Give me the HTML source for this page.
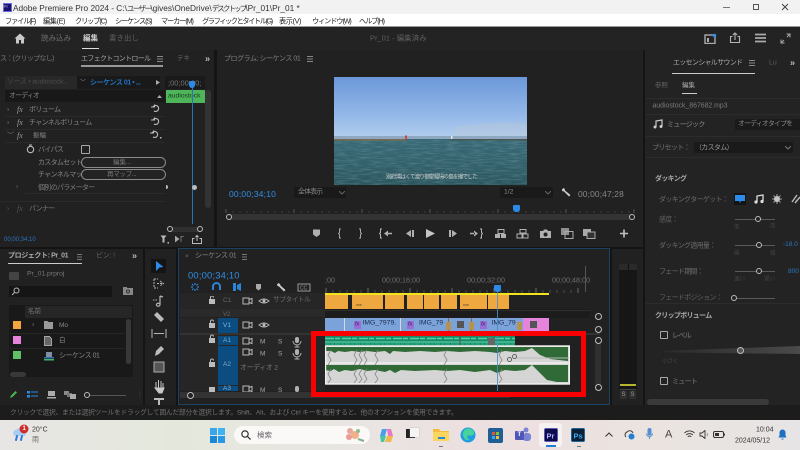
<!DOCTYPE html>
<html lang="ja"><head><meta charset="utf-8"><title>Adobe Premiere Pro 2024</title>
<style>
html,body{margin:0;padding:0;background:#1a1a1a}
#r{position:relative;width:800px;height:450px;overflow:hidden;background:#141414;font-family:"Liberation Sans","Noto Sans CJK JP",sans-serif;filter:blur(.3px)}
#r div,#r svg{position:absolute;display:block}
.t{position:absolute;white-space:nowrap;transform:translateY(-50%);line-height:1;font-size:7.5px;color:#8c8c8c;letter-spacing:-.7px}
.n{letter-spacing:0}
.m{font-size:7.2px;color:#222;letter-spacing:-1.1px;top:20.5px}
.cb{position:absolute;border:1.2px solid #a8a8a8;box-sizing:border-box;border-radius:1px}
.kn{position:absolute;width:6px;height:6px;border:1.2px solid #bdbdbd;border-radius:50%;box-sizing:border-box;background:#222}
.ln{position:absolute;height:1px;background:#5a5a5a}
.fx{font-style:italic;font-family:"Liberation Serif",serif;font-size:8px;letter-spacing:0}
</style></head><body><div id="r">

<!-- title bar -->
<div style="left:0;top:0;width:800px;height:14px;background:#f2f2f2"></div>
<div style="left:3px;top:3px;width:7px;height:7px;background:#1a1266;border:.5px solid #6d6ce0"></div>
<span class="t n" style="left:3.5px;top:7px;font-size:4.5px;color:#a9a9ff">Pr</span>
<span class="t n" style="left:13px;top:7.5px;font-size:8.3px;color:#333">Adobe Premiere Pro 2024 - C:\<span style="font-size:7.5px;letter-spacing:-1.6px">ユーザー</span>\gives\OneDrive\<span style="font-size:7.5px;letter-spacing:-1.9px">デスクトップ</span>\Pr_01\Pr_01 *</span>
<div style="left:723px;top:7px;width:7px;height:1px;background:#777"></div>
<div style="left:753px;top:4px;width:6px;height:6px;border:1px solid #555;box-sizing:border-box"></div>
<svg style="left:781px;top:3px" width="8" height="8" viewBox="0 0 8 8"><path d="M1 1L7 7M7 1L1 7" stroke="#444" stroke-width="1"/></svg>

<!-- menu -->
<div style="left:0;top:14px;width:800px;height:12px;background:#fff"></div>
<span class="t m" style="left:5px">ファイル(F)</span>
<span class="t m" style="left:43px;letter-spacing:-.4px">編集(E)</span>
<span class="t m" style="left:75px">クリップ(C)</span>
<span class="t m" style="left:115px">シーケンス(S)</span>
<span class="t m" style="left:161px">マーカー(M)</span>
<span class="t m" style="left:202px;letter-spacing:-1.4px">グラフィックとタイトル(G)</span>
<span class="t m" style="left:279px;letter-spacing:-.4px">表示(V)</span>
<span class="t m" style="left:312px">ウィンドウ(W)</span>
<span class="t m" style="left:359px">ヘルプ(H)</span>
<div style="left:0;top:26px;width:800px;height:1px;background:#9a9a9a"></div>

<!-- header -->
<div style="left:0;top:27px;width:800px;height:23px;background:#232323"></div>
<svg style="left:14px;top:33px" width="12" height="11" viewBox="0 0 12 11"><path d="M6 .5L.5 5.5H2V10.5H5V7H7V10.5H10V5.5H11.5Z" fill="#c8c8c8"/></svg>
<span class="t n" style="left:41px;top:37.5px;font-size:7.5px;color:#6f6f6f">読み込み</span>
<span class="t n" style="left:83px;top:37.5px;font-size:7.5px;color:#cfcfcf;font-weight:bold">編集</span>
<div style="left:82px;top:48px;width:17px;height:1px;background:#ddd"></div>
<span class="t n" style="left:109px;top:37.5px;font-size:7.5px;color:#5f5f5f">書き出し</span>
<span class="t n" style="left:370px;top:37.5px;font-size:7.5px;color:#5e5e5e">Pr_01 - 編集済み</span>
<svg style="left:704px;top:33px" width="13" height="11" viewBox="0 0 13 11"><rect x="1" y="2" width="10" height="8.5" fill="none" stroke="#aaa" stroke-width="1.4"/><rect x="3" y="5" width="2" height="4" fill="#aaa"/><circle cx="10.5" cy="2.5" r="1.8" fill="#2d8ceb"/></svg>
<svg style="left:729px;top:32px" width="12" height="12" viewBox="0 0 12 12"><path d="M3.5 4.5H1.5V10.5H10.5V4.5H8.5M6 8V1M3.8 3L6 1L8.2 3" fill="none" stroke="#b4b4b4" stroke-width="1.1"/></svg>
<svg style="left:755px;top:33px" width="11" height="10" viewBox="0 0 11 10"><path d="M0 1.5H11M0 5H11M0 8.5H11" stroke="#a9a9a9" stroke-width="1.7"/></svg>
<svg style="left:780px;top:33px" width="11" height="11" viewBox="0 0 11 11"><path d="M6.5 1H10V4.5M10 1L7 4M4.5 10H1V6.5M1 10L4 7" fill="none" stroke="#aaa" stroke-width="1"/></svg>

<!-- panels -->
<div style="left:0;top:50px;width:214px;height:197px;background:#212121"></div>
<div style="left:217px;top:50px;width:426px;height:197px;background:#212121"></div>
<div style="left:645px;top:50px;width:155px;height:355px;background:#232323"></div>
<div style="left:0;top:249px;width:143px;height:156px;background:#212121"></div>
<div style="left:145px;top:249px;width:31px;height:156px;background:#212121"></div>
<div style="left:178px;top:248px;width:432px;height:157px;background:#212121;box-sizing:border-box;border:1px solid #1c4263"></div>
<div style="left:612px;top:249px;width:31px;height:156px;background:#212121"></div>

<!-- effect control -->
<span class="t" style="left:0;top:58.5px;font-size:7px;color:#777">ス：(クリップなし)</span>
<span class="t" style="left:81px;top:58.5px;font-size:7px;color:#a5a5a5">エフェクトコントロール</span>
<svg style="left:157px;top:56px" width="6" height="6"><path d="M0 .5H6M0 3H6M0 5.5H6" stroke="#888"/></svg>
<div style="left:81px;top:65px;width:82px;height:1.5px;background:#999"></div>
<span class="t n" style="left:177px;top:58.5px;font-size:6.5px;color:#666">テキ</span>
<span class="t n" style="left:205px;top:58.5px;font-size:9px;color:#bbb;font-weight:bold">»</span>
<div style="left:5px;top:76px;width:72px;height:13px;background:#282828"></div>
<div style="left:77px;top:76px;width:83px;height:13px;background:#191919"></div>
<span class="t" style="left:7px;top:82.5px;font-size:6.8px;color:#4c4c4c;letter-spacing:-.15px">ソース • audiostock...</span>
<span class="t n" style="left:80px;top:82.5px;font-size:6px;color:#888">﹀</span>
<span class="t" style="left:90px;top:82.5px;font-size:7px;color:#2173c4;font-weight:bold;letter-spacing:-.45px">シーケンス 01 • ...</span>
<svg style="left:156px;top:80px" width="4" height="5"><path d="M0 0L4 2.5L0 5Z" fill="#aaa"/></svg>
<div style="left:165px;top:76px;width:40px;height:13px;background:#1a1a1a"></div>
<span class="t n" style="left:168px;top:82.5px;font-size:7.5px;color:#777">;00;00;00;</span>
<div style="left:5px;top:90px;width:160px;height:12px;background:#181818"></div>
<span class="t" style="left:9px;top:96.5px;font-size:6.8px;color:#888">オーディオ</span>
<svg style="left:157px;top:95px" width="5" height="3"><path d="M0 3L2.5 0L5 3Z" fill="#aaa"/></svg>
<div style="left:166px;top:90px;width:39px;height:13px;background:#4fb55b"></div>
<span class="t n" style="left:168px;top:96.5px;font-size:6.8px;color:#143a17">audiostock</span>
<div style="left:191.5px;top:84px;width:1px;height:140px;background:#2574bb"></div>
<div style="left:189px;top:81px;width:6px;height:7px;background:#2a8ae6;border-radius:1px 1px 3px 3px"></div>
<div style="left:205px;top:90px;width:6px;height:118px;background:#333;border-radius:3px"></div>
<div style="left:5px;top:115.5px;width:160px;height:1px;background:#2a2a2a"></div>
<div style="left:5px;top:129px;width:160px;height:1px;background:#2a2a2a"></div>
<div style="left:5px;top:142px;width:160px;height:1px;background:#2a2a2a"></div>
<div style="left:25px;top:193px;width:140px;height:1px;background:#2a2a2a"></div>
<div style="left:0;top:201px;width:165px;height:1px;background:#2a2a2a"></div>
<span class="t n" style="left:7px;top:110px;font-size:7px;color:#777">›</span>
<span class="t fx" style="left:17px;top:110px;color:#999">fx</span>
<span class="t" style="left:29px;top:110px;color:#858585;font-size:7px">ボリューム</span>
<span class="t n" style="left:7px;top:123px;font-size:7px;color:#777">›</span>
<span class="t fx" style="left:17px;top:123px;color:#999">fx</span>
<span class="t" style="left:29px;top:123px;color:#858585;font-size:7px">チャンネルボリューム</span>
<span class="t n" style="left:7px;top:136px;font-size:7px;color:#777">﹀</span>
<span class="t fx" style="left:17px;top:135.5px;color:#999">fx</span>
<span class="t n" style="left:33px;top:136px;color:#858585;font-size:6.5px">振幅</span>
<svg style="left:151px;top:104px" width="9" height="8" viewBox="0 0 9 8"><path d="M2 3A3 3 0 1 1 3 7M0 3H3.5V.5" fill="none" stroke="#bbb" stroke-width="1.1"/></svg>
<svg style="left:151px;top:117px" width="9" height="8" viewBox="0 0 9 8"><path d="M2 3A3 3 0 1 1 3 7M0 3H3.5V.5" fill="none" stroke="#bbb" stroke-width="1.1"/></svg>
<svg style="left:150px;top:130px" width="12" height="9" viewBox="0 0 12 9"><path d="M2 3A3 3 0 1 1 3 7M0 3H3.5V.5" fill="none" stroke="#bbb" stroke-width="1.1"/><rect x="10" y="7" width="1.5" height="1.5" fill="#bbb"/></svg>
<svg style="left:26px;top:144px" width="9" height="10"><circle cx="4.5" cy="5.5" r="3.2" fill="none" stroke="#bbb" stroke-width="1.1"/><path d="M3 1H6" stroke="#bbb"/></svg>
<span class="t" style="left:38px;top:149.5px;color:#858585;font-size:7px">バイパス</span>
<div class="cb" style="left:81px;top:145px;width:9px;height:9px"></div>
<span class="t" style="left:38px;top:162.5px;color:#858585;font-size:7px">カスタムセット</span>
<div style="left:81px;top:157px;width:85px;height:11px;border:1px solid #8a8a8a;border-radius:6px;box-sizing:border-box;background:#232323"></div>
<span class="t n" style="left:113px;top:162.5px;color:#777;font-size:6.5px">編集...</span>
<span class="t" style="left:38px;top:174.5px;color:#858585;font-size:7px">チャンネルマッ</span>
<div style="left:81px;top:169px;width:85px;height:11px;border:1px solid #8a8a8a;border-radius:6px;box-sizing:border-box;background:#232323"></div>
<span class="t n" style="left:107px;top:174.5px;color:#777;font-size:6.5px;letter-spacing:-.3px">再マップ...</span>
<span class="t n" style="left:16px;top:187px;font-size:7px;color:#666">›</span>
<span class="t" style="left:38px;top:187.5px;color:#7d7d7d;font-size:7px">個別のパラメーター</span>
<div style="left:166px;top:185px;width:2px;height:4px;background:#bbb;border-radius:0 2px 2px 0"></div>
<div style="left:192px;top:184.5px;width:5px;height:5px;background:#bbb;border-radius:50%"></div>
<span class="t n" style="left:7px;top:209px;font-size:7px;color:#555">›</span>
<span class="t fx" style="left:17px;top:209px;color:#555">fx</span>
<span class="t" style="left:29px;top:209px;color:#777;font-size:7px">パンナー</span>
<div style="left:170px;top:226.5px;width:30px;height:5px;background:#303030"></div>
<div class="kn" style="left:167px;top:226px"></div><div class="kn" style="left:197px;top:226px"></div>
<span class="t n" style="left:4px;top:240px;font-size:6px;color:#2878c0">00;00;34;10</span>
<svg style="left:160px;top:235px" width="9" height="9"><path d="M.5 .5H6.5L4.5 3V7.5H2.5V3Z" fill="#bbb"/><rect x="7.5" y="7" width="1.5" height="1.5" fill="#bbb"/></svg>
<svg style="left:175px;top:236px" width="10" height="7"><path d="M0 0L4 3L0 6ZM6 0V6M6 .5L9 .5" fill="#aaa" stroke="#aaa" stroke-width=".6"/></svg>
<svg style="left:192px;top:235px" width="10" height="9"><path d="M2.5 3.5H.5V8.5H9.5V3.5H7.5M5 6V.5M3.5 2L5 .5L6.5 2" fill="none" stroke="#bbb"/></svg>

<!-- program -->
<span class="t" style="left:224px;top:58.5px;font-size:7px;color:#808080;letter-spacing:-.45px">プログラム: シーケンス 01</span>
<svg style="left:307px;top:56px" width="6" height="6"><path d="M0 .5H6M0 3H6M0 5.5H6" stroke="#888"/></svg>
<svg style="left:334px;top:77px" width="193" height="108" viewBox="0 0 193 108" preserveAspectRatio="none">
<defs><linearGradient id="sky" x1="0" y1="0" x2="0" y2="1"><stop offset="0" stop-color="#6c98d9"/><stop offset=".6" stop-color="#93b8e8"/><stop offset="1" stop-color="#b4cfee"/></linearGradient>
<linearGradient id="sea" x1="0" y1="0" x2="0" y2="1"><stop offset="0" stop-color="#386975"/><stop offset=".5" stop-color="#33616c"/><stop offset="1" stop-color="#2b555d"/></linearGradient>
<filter id="nz" x="0" y="0" width="100%" height="100%" color-interpolation-filters="sRGB"><feTurbulence type="fractalNoise" baseFrequency=".08 .8" numOctaves="2" seed="3"/><feColorMatrix values="0 0 0 0 .55 0 0 0 0 .72 0 0 0 0 .76 .7 0 0 0 -.28"/></filter></defs>
<rect width="193" height="62" fill="url(#sky)"/>
<path d="M120 50Q160 44 193 47V60H120Z" fill="#b8c7d8" opacity=".4"/>
<rect y="59" width="193" height="3" fill="#8fa8c2"/>
<rect y="62" width="193" height="46" fill="url(#sea)"/>
<rect y="63" width="193" height="45" filter="url(#nz)"/>
<rect y="62" width="72" height="1.6" fill="#7a6a4c"/><rect x="117" y="62" width="76" height="1.4" fill="#4d5550"/>
<rect x="71" y="58.5" width="2" height="4" fill="#c9453e"/><rect x="117" y="59" width="1.5" height="3" fill="#e6e6e6"/>
</svg>
<span class="t" style="left:386px;top:177.5px;font-size:5.5px;color:#cfcfcf">別府湾はくて渡り御堂幅場の島を撮でした</span>
<span class="t n" style="left:229px;top:193.5px;font-size:8.5px;letter-spacing:.2px;color:#2f8fe6">00;00;34;10</span>
<div style="left:294px;top:187px;width:52px;height:11px;background:#191919"></div>
<span class="t" style="left:298px;top:192.5px;font-size:6.8px;color:#888">全体表示</span>
<svg style="left:339px;top:191px" width="6" height="4"><path d="M0 0L3 3L6 0" fill="none" stroke="#666"/></svg>
<div style="left:500px;top:187px;width:53px;height:11px;background:#191919"></div>
<span class="t n" style="left:504px;top:192.5px;font-size:6.8px;color:#888">1/2</span>
<svg style="left:545px;top:191px" width="6" height="4"><path d="M0 0L3 3L6 0" fill="none" stroke="#666"/></svg>
<svg style="left:561px;top:187px" width="10" height="10" viewBox="0 0 10 10"><path d="M1 2.5L2.5 1L3.5 1.5L4 3.5L9.5 8L8 9.5L3 4.5L1 4Z" fill="#ccc"/></svg>
<span class="t n" style="left:578px;top:193.5px;font-size:8.4px;color:#888;letter-spacing:.15px">00;00;47;28</span>
<svg style="left:225px;top:209px" width="410" height="5"><path d="M1 0V4M69 0V4M137 0V4M205 0V4M273 0V4M341 0V4M409 0V4" stroke="#555"/><path d="M8 2V4M15 2V4M22 2V4M29 2V4M36 2V4M43 2V4M50 2V4M57 2V4M64 2V4M76 2V4M83 2V4M90 2V4M97 2V4M104 2V4M111 2V4M118 2V4M125 2V4M132 2V4M144 2V4M151 2V4M158 2V4M165 2V4M172 2V4M179 2V4M186 2V4M193 2V4M200 2V4M212 2V4M219 2V4M226 2V4M233 2V4M240 2V4M247 2V4M254 2V4M261 2V4M268 2V4M280 2V4M287 2V4M294 2V4M301 2V4M308 2V4M315 2V4M322 2V4M329 2V4M336 2V4M348 2V4M355 2V4M362 2V4M369 2V4M376 2V4M383 2V4M390 2V4M397 2V4M404 2V4" stroke="#3e3e3e"/></svg>
<div style="left:229px;top:214px;width:403px;height:6px;background:#333"></div>
<div class="kn" style="left:226px;top:214px"></div><div class="kn" style="left:629px;top:214px"></div>
<div style="left:513px;top:205px;width:7px;height:7px;background:#2a8ae6;border-radius:1px 1px 3px 3px"></div>
<!-- transport -->
<svg style="left:312px;top:228px" width="320" height="11" viewBox="0 0 320 11" fill="#b0b0b0">
<path d="M1 1.5H8V6.5L4.5 9L1 6.5Z"/>
<path d="M29 1H27.5V4.5L26.5 5.5L27.5 6.5V10H29M47 1H48.5V4.5L49.5 5.5L48.5 6.5V10H47" fill="none" stroke="#a5a5a5"/>
<path d="M70 1H68.5V4.5L67.5 5.5L68.5 6.5V10H70" fill="none" stroke="#b5b5b5"/><path d="M72 5.5L76 2.5V8.5ZM75 4.8H80V6.2H75Z"/>
<path d="M94 5.5L99 2V9ZM100 2H102V9H100Z"/>
<path d="M114 1L123 5.5L114 10Z" fill="#c6c6c6"/>
<path d="M137 2H139V9H137ZM140 2L145 5.5L140 9Z"/>
<path d="M166 5.5L162 2.5V8.5ZM158 4.8H163V6.2H158Z"/><path d="M168 1H169.5V4.5L170.5 5.5L169.5 6.5V10H168" fill="none" stroke="#b5b5b5"/>
<path d="M183 6H188V10H183ZM189 6H194V10H189Z"/><path d="M186 1.5H192V5.5H186Z" fill="none" stroke="#b0b0b0"/>
<path d="M205 6H210V10H205ZM211 6H216V10H211Z" fill="none" stroke="#b0b0b0"/><path d="M208 1.5H214V5H208Z" fill="none" stroke="#b0b0b0"/>
<path d="M228 3H231L232 1.5H235L236 3H239V10H228ZM233.5 4.5A2 2 0 1 0 233.6 8.5A2 2 0 1 0 233.5 4.5Z" fill-rule="evenodd"/>
<path d="M249 0H257V7H249Z" fill="#8f8f8f"/><path d="M253 3.5H261V10.5H253Z" fill="none" stroke="#aaa"/>
<path d="M271 1H279V8H271Z" fill="#aaa"/><path d="M275 4H283V10.5H275Z" fill="#333" stroke="#aaa"/>
<path d="M308 4.7H311.2V1.5H312.8V4.7H316V6.3H312.8V9.5H311.2V6.3H308Z" fill="#c2c2c2"/>
</svg>

<!-- project -->
<span class="t" style="left:8px;top:256px;font-size:7px;color:#aaa;font-weight:bold;letter-spacing:-.4px">プロジェクト: Pr_01</span>
<svg style="left:77px;top:254px" width="5" height="6"><path d="M0 .5H5M0 3H5M0 5.5H5" stroke="#777"/></svg>
<div style="left:8px;top:263px;width:74px;height:1px;background:#ccc"></div>
<span class="t" style="left:96px;top:256px;font-size:7px;color:#5f5f5f;letter-spacing:-.2px">ビン: !</span>
<span class="t n" style="left:132px;top:256px;font-size:9px;color:#bbb;font-weight:bold">»</span>
<div style="left:9px;top:272px;width:10px;height:8px;background:#444;border-radius:1px"></div>
<span class="t n" style="left:27px;top:275px;font-size:6.8px;color:#777">Pr_01.prproj</span>
<div style="left:9px;top:286px;width:103px;height:11px;background:#151515"></div>
<svg style="left:11px;top:287px" width="9" height="9"><circle cx="5.5" cy="3.5" r="2.5" fill="none" stroke="#bbb"/><path d="M3.5 5.5L1 8" stroke="#bbb"/></svg>
<svg style="left:123px;top:286px" width="10" height="9"><path d="M0 1H3.5L4.5 2H10V9H0Z" fill="#888"/><circle cx="5" cy="5.5" r="1.5" fill="none" stroke="#333"/></svg>
<div style="left:9px;top:305px;width:124px;height:72px;background:#191919"></div>
<div style="left:25px;top:306px;width:107px;height:12px;background:#262626"></div>
<span class="t n" style="left:28px;top:311.5px;font-size:6.5px;color:#777">名前</span>
<div style="left:10px;top:333px;width:115px;height:1px;background:#262626"></div>
<div style="left:10px;top:348px;width:115px;height:1px;background:#262626"></div>
<div style="left:13px;top:321px;width:8px;height:8px;background:#f2a740"></div>
<div style="left:13px;top:336px;width:8px;height:8px;background:#e683dd"></div>
<div style="left:13px;top:351px;width:8px;height:8px;background:#5fc065"></div>
<span class="t n" style="left:32px;top:325px;font-size:7px;color:#777">›</span>
<svg style="left:44px;top:321px" width="9" height="8"><path d="M0 0H3.5L4.5 1H9V8H0Z" fill="#999"/></svg>
<span class="t n" style="left:59px;top:325.5px;font-size:6.5px;color:#888">Mo</span>
<svg style="left:44px;top:336px" width="8" height="10"><path d="M.5 .5H5.5L7.5 2.5V9.5H.5Z" fill="#666" stroke="#ccc" stroke-width=".7"/></svg>
<span class="t n" style="left:59px;top:340.5px;font-size:6.5px;color:#888">白</span>
<svg style="left:44px;top:352px" width="10" height="9"><rect x="2" y="0" width="6" height="6" fill="#7f8ea3"/><rect y="5" width="10" height="1.5" fill="#3e6bad"/><rect y="7" width="10" height="1.5" fill="#3fb56b"/></svg>
<span class="t" style="left:59px;top:355.5px;font-size:7px;color:#888;letter-spacing:-.5px">シーケンス 01</span>
<div style="left:126px;top:319px;width:5px;height:45px;background:#383838;border-radius:3px"></div>
<div style="left:10px;top:372px;width:16px;height:5px;background:#383838;border-radius:3px"></div>
<svg style="left:9px;top:390px" width="9" height="9"><path d="M1 8L2 5.5L6.5 1L8 2.5L3.5 7Z" fill="#49b64e"/></svg>
<svg style="left:27px;top:391px" width="11" height="7"><path d="M0 0H3V2.5H0ZM0 4H3V6.5H0Z" fill="#2a8ae6"/><path d="M4 1H11M4 5H11" stroke="#2a8ae6"/></svg>
<svg style="left:47px;top:391px" width="9" height="8"><rect x="1" y="0" width="7" height="5" fill="#aaa"/><rect y="6" width="9" height="1.5" fill="#aaa"/></svg>
<svg style="left:64px;top:391px" width="12" height="8"><rect y="0" width="5" height="4" fill="#888"/><rect x="3" y="2" width="5" height="4" fill="#777"/><rect x="6" y="3" width="6" height="5" fill="#aaa"/></svg>
<div style="left:90px;top:395px;width:36px;height:1px;background:#555"></div>
<div class="kn" style="left:84px;top:392px"></div>
<span class="t n" style="left:137px;top:395px;font-size:6px;color:#555">⋮</span>

<!-- tools -->
<div style="left:151px;top:259px;width:15px;height:14px;background:#141414"></div>
<svg style="left:151px;top:259px" width="16" height="150" viewBox="0 0 16 150">
<path d="M5 2L12.5 8L8.5 8.5L5 12Z" fill="#2d8ceb"/>
<path d="M3 20V29M3 20H7M3 29H7M6 24.5H12M9 22L12.5 24.5L9 27" fill="none" stroke="#b5b5b5" stroke-dasharray="2 1"/>
<path d="M9 37V46M9 37L12 38M9 46A1.8 1.5 0 1 1 8.8 45" fill="none" stroke="#b5b5b5" stroke-width="1.2"/><path d="M2 41H6" stroke="#aaa" stroke-dasharray="1.5 1"/>
<path d="M3 56L6 53L13 60L10 63Z" fill="#bbb"/>
<path d="M1 70V79M15 70V79M3 74.5H13" stroke="#b5b5b5"/>
<path d="M4 97L5 92L10 87L13 90L8 95Z" fill="#bbb"/>
<rect x="3" y="103" width="10" height="10" fill="#555" stroke="#aaa"/>
<path d="M5 130V123M7.5 129V121M10 129V122M12 130V124M4 129L8 134H11L13 129Z" fill="#c8c8c8" stroke="#c8c8c8"/>
<path d="M3 139H13V141H9V149H7V141H3Z" fill="#bbb"/>
</svg>

<!-- timeline header -->
<span class="t n" style="left:185px;top:257px;font-size:6.5px;color:#777">×</span>
<span class="t" style="left:195px;top:256px;font-size:7px;color:#888;letter-spacing:-.4px">シーケンス 01</span>
<svg style="left:242px;top:254px" width="5" height="6"><path d="M0 .5H5M0 3H5M0 5.5H5" stroke="#777"/></svg>
<span class="t n" style="left:188px;top:274.5px;font-size:9.4px;color:#2f8fe6;letter-spacing:.2px">00;00;34;10</span>
<svg style="left:190px;top:282px" width="122" height="10" viewBox="0 0 122 10">
<path d="M5 1V3M5 7V9M1 5H3M7 5H9M2 2L3.5 3.5M8 2L6.5 3.5M2 8L3.5 6.5M8 8L6.5 6.5" stroke="#2a85d9" stroke-width="1.2"/>
<path d="M23 8V4.5A3.5 3.5 0 0 1 30 4.5V8" fill="none" stroke="#2a85d9" stroke-width="2"/>
<path d="M43 1H46V9H43ZM47 3L51 1V9L47 7Z" fill="#2a85d9"/>
<path d="M66 2H71V6.5L68.5 8.5L66 6.5Z" fill="#aaa"/>
<path d="M87 2.5L88.5 1L90 2L90.5 3.5L95.5 8L94 9.5L89 4.5L87.5 4Z" fill="#ccc"/>
<rect x="108" y="2" width="12" height="7" fill="none" stroke="#999"/><text x="110" y="7.5" font-size="5" fill="#999" font-family="Liberation Sans">CC</text>
</svg>

<!-- ruler -->
<span class="t n" style="left:325px;top:279.5px;font-size:7.2px;color:#707070">;00</span>
<span class="t n" style="left:382px;top:279.5px;font-size:7.2px;color:#707070">00;00;16;00</span>
<span class="t n" style="left:467px;top:279.5px;font-size:7.2px;color:#707070">00;00;32;00</span>
<span class="t n" style="left:552px;top:279.5px;font-size:7.2px;color:#707070">00;00;48;00</span>
<svg style="left:325px;top:288px" width="260" height="5"><path d="M1 0V5M43 0V5M85 0V5M127 0V5M169 0V5M211 0V5M253 0V5" stroke="#666"/><path d="M8 2V5M15 2V5M22 2V5M29 2V5M36 2V5M50 2V5M57 2V5M64 2V5M71 2V5M78 2V5M92 2V5M99 2V5M106 2V5M113 2V5M120 2V5M134 2V5M141 2V5M148 2V5M155 2V5M162 2V5M176 2V5M183 2V5M190 2V5M197 2V5M204 2V5M218 2V5M225 2V5M232 2V5M239 2V5M246 2V5" stroke="#4a4a4a"/></svg>
<div style="left:585px;top:266px;width:1px;height:26px;background:#555"></div>

<!-- track rows -->
<div style="left:180px;top:293px;width:145px;height:16px;background:#262626"></div>
<div style="left:180px;top:309px;width:145px;height:8px;background:#2a2a2a"></div>
<div style="left:180px;top:318px;width:145px;height:15px;background:#262626"></div>
<div style="left:180px;top:334px;width:145px;height:57px;background:#262626"></div>
<div style="left:180px;top:333px;width:420px;height:2px;background:#333"></div>
<div style="left:325px;top:309px;width:265px;height:9px;background:#1c1c1c"></div>
<div style="left:325px;top:309.5px;width:265px;height:1px;background:#2e2e2e"></div>
<div style="left:218px;top:318px;width:20px;height:15px;background:#0b4d80"></div>
<div style="left:218px;top:336px;width:20px;height:9px;background:#0b4d80"></div>
<div style="left:218px;top:346px;width:20px;height:39px;background:#0b4d80"></div>
<div style="left:218px;top:386px;width:20px;height:5px;background:#0b4d80"></div>
<span class="t n" style="left:223px;top:301px;font-size:6.5px;color:#666">C1</span>
<span class="t n" style="left:223px;top:315px;font-size:6px;color:#666">V2</span>
<span class="t n" style="left:223px;top:325.5px;font-size:6.5px;color:#8ab4d8">V1</span>
<span class="t n" style="left:223px;top:340.5px;font-size:6.5px;color:#7fa9cc">A1</span>
<span class="t n" style="left:223px;top:365px;font-size:6.5px;color:#7fa9cc">A2</span>
<span class="t n" style="left:223px;top:389px;font-size:6.5px;color:#7fa9cc">A3</span>
<span class="t" style="left:273px;top:301px;font-size:6.8px;color:#6a6a6a;letter-spacing:-.6px">サブタイトル</span>
<span class="t" style="left:240px;top:368.5px;font-size:6.8px;color:#7a7a7a;letter-spacing:-.2px">オーディオ 2</span>
<svg style="left:208px;top:296px" width="100" height="100" viewBox="0 0 100 100">
<g fill="#bbb"><path d="M1 3H7V8H1Z"/><path d="M2.5 3V1.5A1.5 1.5 0 0 1 5.5 1.5" fill="none" stroke="#bbb"/>
<path d="M1 27H7V32H1Z"/><path d="M2.5 27V25.5A1.5 1.5 0 0 1 5.5 25.5" fill="none" stroke="#bbb"/>
<path d="M1 42H7V47H1Z"/><path d="M2.5 42V40.5A1.5 1.5 0 0 1 5.5 40.5" fill="none" stroke="#bbb"/>
<path d="M1 66H7V71H1Z"/><path d="M2.5 66V64.5A1.5 1.5 0 0 1 5.5 64.5" fill="none" stroke="#bbb"/>
<path d="M1 91H7V96H1Z"/></g>
<g fill="none" stroke="#b8b8b8"><rect x="35" y="2" width="6" height="6"/><path d="M41 3.5L44 2.5V7.5L41 6.5"/>
<rect x="35" y="26" width="6" height="6"/><path d="M41 27.5L44 26.5V31.5L41 30.5"/>
<rect x="35" y="42" width="6" height="6"/><path d="M41 43.5L44 42.5V47.5L41 46.5"/>
<rect x="35" y="53" width="6" height="6"/><path d="M41 54.5L44 53.5V58.5L41 57.5"/>
<rect x="35" y="90" width="6" height="6"/><path d="M41 91.5L44 90.5V95.5L41 94.5"/>
<path d="M51 5Q56 1 61 5Q56 9 51 5ZM51 29Q56 25 61 29Q56 33 51 29Z"/></g>
<circle cx="56" cy="5" r="1.5" fill="#bbb"/><circle cx="56" cy="29" r="1.5" fill="#bbb"/>
<g fill="#a5a5a5" font-size="6.5" font-family="Liberation Sans"><text x="52" y="47.5">M</text><text x="70" y="47.5">S</text><text x="52" y="59.5">M</text><text x="70" y="59.5">S</text><text x="52" y="96">M</text><text x="70" y="96">S</text></g>
<g fill="none" stroke="#b0b0b0"><path d="M85 45A4 4 0 0 0 93 45M89 49V51M86.5 51H91.5M85 57A4 4 0 0 0 93 57M89 61V63M86.5 63H91.5"/></g>
<g fill="#b0b0b0"><rect x="87" y="41" width="4" height="6" rx="2"/><rect x="87" y="53" width="4" height="6" rx="2"/><rect x="87" y="90" width="4" height="6" rx="2"/></g>
</svg>

<!-- C1 clips -->
<div style="left:325px;top:293px;width:23px;height:16px;background:#efa83f"></div>
<div style="left:352px;top:293px;width:31px;height:16px;background:#efa83f"></div>
<div style="left:385px;top:293px;width:19px;height:16px;background:#efa83f"></div>
<div style="left:407px;top:293px;width:16px;height:16px;background:#efa83f"></div>
<div style="left:423.5px;top:293px;width:15.5px;height:16px;background:#efa83f"></div>
<div style="left:441px;top:293px;width:16px;height:16px;background:#efa83f"></div>
<div style="left:460px;top:293px;width:27px;height:16px;background:#efa83f"></div>
<div style="left:488px;top:293px;width:21px;height:16px;background:#efa83f"></div>
<span class="t n" style="left:356px;top:304px;font-size:7px;color:#222;font-weight:bold">...</span>
<span class="t n" style="left:463px;top:304px;font-size:7px;color:#222;font-weight:bold">...</span>
<div style="left:325px;top:293px;width:224px;height:1.5px;background:#f2e21b"></div>

<!-- V1 clips -->
<div style="left:325px;top:318px;width:198px;height:14px;background:#7ba3da"></div>
<div style="left:523px;top:318px;width:26px;height:14px;background:#e683dd"></div>
<div style="left:344px;top:318px;width:1px;height:14px;background:#d8d8d8"></div>
<div style="left:400px;top:318px;width:1px;height:14px;background:#d8d8d8"></div>
<div style="left:448px;top:318px;width:1px;height:14px;background:#7c6e4d"></div>
<div style="left:471px;top:318px;width:1px;height:14px;background:#7c6e4d"></div>
<div style="left:354px;top:320.5px;width:7px;height:8px;background:#9a6cd6"></div>
<div style="left:407px;top:320.5px;width:7px;height:8px;background:#9a6cd6"></div>
<div style="left:480px;top:320.5px;width:7px;height:8px;background:#9a6cd6"></div>
<span class="t n" style="left:355px;top:325px;font-size:5.5px;color:#2a1a55;font-style:italic">fx</span>
<span class="t n" style="left:408px;top:325px;font-size:5.5px;color:#2a1a55;font-style:italic">fx</span>
<span class="t n" style="left:481px;top:325px;font-size:5.5px;color:#2a1a55;font-style:italic">fx</span>
<span class="t n" style="left:362.5px;top:323.5px;font-size:6.8px;color:#172a4d">IMG_7979.</span>
<span class="t n" style="left:419px;top:323.5px;font-size:6.8px;color:#172a4d">IMG_79</span>
<span class="t n" style="left:491.5px;top:323.5px;font-size:6.8px;color:#172a4d">IMG_79</span>
<div style="left:446px;top:322px;width:5px;height:8px;background:#b3934f"></div>
<div style="left:469px;top:322px;width:5px;height:8px;background:#b3934f"></div>
<div style="left:517px;top:322px;width:5px;height:8px;background:#b3934f"></div>
<div style="left:457px;top:320.5px;width:7px;height:7px;background:#555"></div>
<div style="left:530px;top:320.5px;width:7px;height:7px;background:#555"></div>

<!-- A1 clip -->
<div style="left:325px;top:336px;width:190px;height:10px;background:#1c8a68"></div>
<svg style="left:325px;top:336px" width="190" height="10" viewBox="0 0 190 10"><path d="M0 2.5H190" stroke="#4ed3a2" stroke-width="1.5" stroke-dasharray="9 1 5 2"/><path d="M0 6H190" stroke="#5ee0b0" stroke-width="1"/><path d="M0 8H190" stroke="#2ca87f" stroke-width="1.4" stroke-dasharray="5 1 3 1"/><path d="M135 0V10" stroke="#555"/></svg>
<div style="left:488px;top:338px;width:7px;height:7px;background:#666"></div>

<!-- A2 clip -->
<svg style="left:325px;top:345px" width="245" height="40" viewBox="0 0 245 40">
<rect x="0" y="1" width="244" height="38" fill="#d5d5d5"/>
<path d="M0 3H207L215 10 225 14 243 16V2H0Z" fill="#2f6a37"/>
<path d="M207 20L215 28 222 35 232 37H243V20Z" fill="#2f6a37"/>
<path d="M0 3V6L6 6 10 8 13 6 20 7 27 6 35 7 42 6 50 7 60 6 65 9 68 6 80 7 95 6 110 7 122 6 135 7 150 6 165 7 172 8 180 6 190 7 200 6 207 3Z" fill="#2f6a37"/>
<path d="M0 20V25L6 26 9 24 14 27 20 25 27 26 35 24 42 26 50 25 60 27 65 25 70 28 76 25 90 26 110 25 122 26 135 25 150 27 165 25 172 28 180 25 190 26 200 25 207 20Z" fill="#2f6a37"/>
<path d="M0 18H244" stroke="#eee" stroke-width="1.4"/>
<rect x=".5" y="1" width="244" height="38" fill="none" stroke="#f2f2f2" stroke-width="1.4"/>
<g fill="none" stroke="#888" stroke-width=".8"><path d="M6 5L3 10 6 15 3 20"/><path d="M6 24L3 29 6 34 3 38"/>
<path d="M32 5L29 10 32 15 29 20M32 24L29 29 32 34 29 38M37 5L34 10 37 15 34 20M37 24L34 29 37 34 34 38M42 5L39 10 42 15 39 20M42 24L39 29 42 34 39 38M53 5L50 10 53 15 50 20M53 24L50 29 53 34 50 38"/>
<path d="M122 5L119 10 122 15 119 20M122 24L119 29 122 34 119 38M177 5L174 10 177 15 174 20M177 24L174 29 177 34 174 38"/></g>
<path d="M189 13H244" stroke="#bbb" stroke-width="1"/>
<circle cx="184.5" cy="14.5" r="2" fill="#d5d5d5" stroke="#444" stroke-width=".8"/><circle cx="189.5" cy="11.5" r="2" fill="#d5d5d5" stroke="#444" stroke-width=".8"/>
</svg>
<div style="left:497px;top:288px;width:1px;height:103px;background:#4a8fcb;opacity:.85"></div>
<div style="left:493.5px;top:285px;width:7px;height:7px;background:#2a8ae6;border-radius:1px 1px 3px 3px"></div>

<!-- timeline scroll -->
<div style="left:180px;top:392px;width:330px;height:6px;background:#333"></div>
<div style="left:595px;top:340px;width:6px;height:47px;background:#303030"></div>
<div class="kn" style="left:595px;top:313px;width:7px;height:7px"></div>
<div class="kn" style="left:595px;top:326px;width:7px;height:7px"></div>
<div class="kn" style="left:595px;top:337px;width:7px;height:7px"></div>
<div class="kn" style="left:595px;top:384px;width:7px;height:7px"></div>
<div class="kn" style="left:187px;top:392px;width:7px;height:7px"></div>

<!-- red rect -->
<div style="left:311px;top:331px;width:275px;height:66px;box-sizing:border-box;border:5px solid #fa0000"></div>

<!-- meter -->
<div style="left:619px;top:264px;width:18px;height:126px;background:#161616"></div>
<div style="left:619px;top:264px;width:18px;height:6px;background:#2a2a2a"></div>
<div style="left:628px;top:264px;width:1px;height:6px;background:#111"></div>
<div style="left:620px;top:384px;width:16px;height:1.5px;background:#b5b52e"></div>
<div style="left:620px;top:389px;width:16px;height:1px;background:#444"></div>
<div style="left:620px;top:390.5px;width:7px;height:8px;background:#2f2f2f"></div>
<div style="left:629px;top:390.5px;width:7px;height:8px;background:#2f2f2f"></div>
<span class="t n" style="left:621.5px;top:395px;font-size:6px;color:#999">S</span>
<span class="t n" style="left:630.5px;top:395px;font-size:6px;color:#999">S</span>

<!-- essential sound -->
<span class="t" style="left:673px;top:62.5px;font-size:7px;color:#a8a8a8">エッセンシャルサウンド</span>
<svg style="left:749px;top:60px" width="6" height="6"><path d="M0 .5H6M0 3H6M0 5.5H6" stroke="#888"/></svg>
<div style="left:672px;top:73px;width:83px;height:1px;background:#ccc"></div>
<span class="t n" style="left:769px;top:62.5px;font-size:7px;color:#5a5a5a">Lu</span>
<span class="t n" style="left:790px;top:62.5px;font-size:9px;color:#bbb;font-weight:bold">»</span>
<span class="t n" style="left:655px;top:85.5px;font-size:6.5px;color:#666">参照</span>
<span class="t n" style="left:682px;top:85.5px;font-size:6.5px;color:#aaa">編集</span>
<div style="left:682px;top:93px;width:15px;height:1px;background:#ccc"></div>
<div style="left:646px;top:98px;width:154px;height:1px;background:#2c2c2c"></div>
<span class="t n" style="left:652.5px;top:106.5px;font-size:6.9px;color:#7b7b7b">audiostock_867682.mp3</span>
<div style="left:646px;top:114px;width:154px;height:1px;background:#2c2c2c"></div>
<svg style="left:653px;top:119px" width="10" height="10"><path d="M3 8V2L9 1V7" fill="none" stroke="#ccc" stroke-width="1.2"/><circle cx="2" cy="8" r="1.5" fill="#ccc"/><circle cx="8" cy="7.5" r="1.5" fill="#ccc"/></svg>
<span class="t" style="left:667px;top:124.5px;font-size:7px;color:#8a8a8a">ミュージック</span>
<div style="left:735px;top:119px;width:65px;height:11px;background:#1a1a1a"></div>
<span class="t" style="left:738px;top:124.5px;font-size:6.8px;color:#888">オーディオタイプを</span>
<div style="left:646px;top:136px;width:154px;height:1px;background:#2c2c2c"></div>
<span class="t" style="left:652px;top:147.5px;font-size:7px;color:#717171">プリセット：</span>
<div style="left:694px;top:142px;width:99px;height:11px;background:#1a1a1a"></div>
<span class="t" style="left:695px;top:147.5px;font-size:7px;color:#999">（カスタム）</span>
<svg style="left:785px;top:146px" width="6" height="4"><path d="M0 0L3 3L6 0" fill="none" stroke="#777"/></svg>
<div style="left:646px;top:157px;width:154px;height:1px;background:#2c2c2c"></div>
<span class="t" style="left:655px;top:178.5px;font-size:7px;color:#a8a8a8;font-weight:bold">ダッキング</span>
<span class="t" style="left:659px;top:199.5px;font-size:7px;color:#6b6b6b">ダッキングターゲット：</span>
<div style="left:734px;top:193px;width:12px;height:12px;background:#141414;border-radius:1px"></div>
<svg style="left:735px;top:195px" width="10" height="9"><path d="M0 0H10V6H6L4.5 8.5V6H0Z" fill="#2d8ceb"/></svg>
<svg style="left:754px;top:194px" width="10" height="10"><path d="M3 8V2L9 1V7" fill="none" stroke="#ddd" stroke-width="1.3"/><circle cx="2" cy="8" r="1.6" fill="#ddd"/><circle cx="8" cy="7.5" r="1.6" fill="#ddd"/></svg>
<svg style="left:772px;top:194px" width="10" height="10"><circle cx="5" cy="5" r="3" fill="#c5c5c5"/><path d="M5 0V10M0 5H10M1.5 1.5L8.5 8.5M8.5 1.5L1.5 8.5" stroke="#c5c5c5" stroke-width=".8"/></svg>
<svg style="left:791px;top:194px" width="9" height="10"><path d="M1 8L6 1M4 9L9 3" stroke="#bbb" stroke-width="1.4"/></svg>
<span class="t" style="left:659px;top:219.5px;font-size:7px;color:#5f5f5f">感度：</span>
<div class="ln" style="left:735px;top:219px;width:40px"></div><div class="kn" style="left:755px;top:216px;background:#232323"></div>
<span class="t n" style="left:734px;top:228px;font-size:5.5px;color:#444">低</span><span class="t n" style="left:770px;top:227px;font-size:5.5px;color:#444">高</span>
<span class="t" style="left:659px;top:245.5px;font-size:7px;color:#6b6b6b">ダッキング適用量：</span>
<div class="ln" style="left:735px;top:245px;width:40px"></div><div class="kn" style="left:756px;top:242px;background:#232323"></div>
<span class="t n" style="left:734px;top:254px;font-size:5.5px;color:#444">弱</span><span class="t n" style="left:770px;top:254px;font-size:5.5px;color:#444">強</span>
<span class="t n" style="left:783px;top:245px;font-size:6.5px;color:#2878c0">-18.0</span>
<span class="t" style="left:659px;top:271.5px;font-size:7px;color:#6b6b6b">フェード期間：</span>
<div class="ln" style="left:735px;top:271px;width:40px"></div><div class="kn" style="left:756px;top:268px;background:#232323"></div>
<span class="t n" style="left:734px;top:280px;font-size:5.5px;color:#444">速い</span><span class="t n" style="left:764px;top:280px;font-size:5.5px;color:#444">遅い</span>
<span class="t n" style="left:788px;top:271.5px;font-size:6.5px;color:#2878c0">800</span>
<span class="t" style="left:659px;top:297.5px;font-size:7px;color:#5f5f5f">フェードポジション：</span>
<div class="ln" style="left:737px;top:297.5px;width:38px"></div><div class="kn" style="left:731px;top:295px;background:#232323"></div>
<div style="left:646px;top:303px;width:154px;height:1px;background:#2c2c2c"></div>
<span class="t" style="left:655px;top:315.5px;font-size:7px;color:#a8a8a8;font-weight:bold">クリップボリューム</span>
<div class="cb" style="left:660px;top:331px;width:8px;height:8px"></div>
<span class="t" style="left:672px;top:335.5px;font-size:7px;color:#7f7f7f">レベル</span>
<div style="left:664px;top:346px;width:136px;height:8px;background:linear-gradient(90deg,#2a2a2a,#4a4a4a);clip-path:polygon(0 60%,100% 0,100% 100%,0 80%)"></div>
<div class="kn" style="left:737px;top:346.5px;width:7px;height:7px;background:#555"></div>
<span class="t" style="left:662px;top:361.5px;font-size:6px;color:#444">小さく</span>
<div class="cb" style="left:660px;top:377px;width:8px;height:8px"></div>
<span class="t" style="left:672px;top:381.5px;font-size:7px;color:#777">ミュート</span>
<div style="left:647px;top:399px;width:122px;height:6px;background:#3a3a3a;border-radius:3px"></div>

<!-- status -->
<div style="left:0;top:405px;width:800px;height:15px;background:#1c1c1c"></div>
<span class="t" style="left:10px;top:413.5px;font-size:6.7px;color:#707070;letter-spacing:-.18px">クリックで選択、または選択ツールをドラッグして囲んだ部分を選択します。Shift、Alt、および Ctrl キーを使用すると、他のオプションを使用できます。</span>

<!-- taskbar -->
<div style="left:0;top:420px;width:800px;height:30px;background:linear-gradient(90deg,#e8e6e4 0,#e4e8dc 22%,#e9e5e2 45%,#ecdfe0 60%,#ebe3df 78%,#e6e4e4 100%)"></div>
<svg style="left:11px;top:424px" width="20" height="20" viewBox="0 0 20 20"><path d="M3 11A3 3 0 0 1 5 6A4 4 0 0 1 12 7A3 3 0 0 1 14 12H4Z" fill="#a8cdf2"/><path d="M6 12L5 16M11 12L10 16" stroke="#2d78d8" stroke-width="2" stroke-linecap="round"/><circle cx="13" cy="5" r="4.5" fill="#cf2d2d"/></svg>
<span class="t n" style="left:22.5px;top:429px;font-size:6px;color:#fff;font-weight:bold">1</span>
<span class="t n" style="left:32px;top:430px;font-size:7px;color:#333">20°C</span>
<span class="t n" style="left:32px;top:440px;font-size:7px;color:#666">雨</span>
<svg style="left:210px;top:428px" width="15" height="15"><rect width="7" height="7" fill="#3aa6ea"/><rect x="8" width="7" height="7" fill="#3fb2f2"/><rect y="8" width="7" height="7" fill="#1b87d8"/><rect x="8" y="8" width="7" height="7" fill="#2a98e6"/></svg>
<div style="left:234px;top:426px;width:136px;height:18px;background:#fbf8f8;border-radius:9px"></div>
<svg style="left:241px;top:430px" width="10" height="10"><circle cx="4" cy="4" r="3.2" fill="none" stroke="#222" stroke-width="1.1"/><path d="M6.5 6.5L9.5 9.5" stroke="#222" stroke-width="1.2"/></svg>
<span class="t n" style="left:257px;top:435px;font-size:7.5px;color:#666">検索</span>
<svg style="left:343px;top:427px" width="23" height="16"><circle cx="7" cy="4" r="3" fill="#e8a59b"/><circle cx="12" cy="8" r="4" fill="#f0b08a"/><circle cx="6" cy="10" r="3" fill="#ec9a96"/><circle cx="15" cy="4" r="2" fill="#8ebd8a"/><path d="M15 12L21 14" stroke="#8ab08a" stroke-width="2"/></svg>
<svg style="left:379px;top:428px" width="15" height="15"><path d="M3 1H8L6 8H1Z" fill="#4a9fe8"/><path d="M8 1H12L14 8H9Z" fill="#e57ac0"/><path d="M1 8H7L5 14H2Z" fill="#45c7a6"/><path d="M8 8H14L12 14H6Z" fill="#f2b84b"/></svg>
<div style="left:406px;top:429px;width:9px;height:9px;background:#222"></div>
<div style="left:410px;top:428px;width:9px;height:9px;background:#f4f4f4;box-shadow:0 0 1px #999"></div>
<svg style="left:433px;top:428px" width="16" height="14"><path d="M0 1H6L7.5 3H16V13H0Z" fill="#f3bd3f"/><rect y="4" width="16" height="9" fill="#fbd65e"/><rect x="5" y="9" width="7" height="2" fill="#2a87d8"/></svg>
<div style="left:439px;top:446px;width:4px;height:1px;background:#777"></div>
<svg style="left:460px;top:427px" width="16" height="16"><circle cx="8" cy="8" r="7.5" fill="#1f9de0"/><path d="M3 8A5.5 5.5 0 0 1 14 6C14 9 10 9 8 8Q6 11 10 13Q4 14 3 8Z" fill="#47d49c"/></svg>
<svg style="left:488px;top:428px" width="15" height="15"><rect width="15" height="15" rx="2" fill="#1f5f96"/><rect x="4" y="4" width="3" height="3" fill="#e8542f"/><rect x="8" y="4" width="3" height="3" fill="#7ec13a"/><rect x="4" y="8" width="3" height="3" fill="#3aa6ea"/><rect x="8" y="8" width="3" height="3" fill="#f4b93a"/></svg>
<svg style="left:515px;top:427px" width="17" height="16"><circle cx="11" cy="3" r="2.5" fill="#7b83d6"/><rect x="8" y="6" width="8" height="8" rx="3" fill="#7b83d6"/><rect x="0" y="4" width="9" height="9" rx="1" fill="#4e57b8"/></svg>
<span class="t n" style="left:517.5px;top:435px;font-size:6px;color:#fff;font-weight:bold">T</span>
<div style="left:539px;top:423px;width:23px;height:24px;background:#f6f2f2;border-radius:3px"></div>
<div style="left:544px;top:428px;width:14px;height:14px;background:#0c0c4d;border-radius:2px;box-shadow:inset 0 0 0 .6px #8d8de8"></div>
<span class="t n" style="left:546.5px;top:435.5px;font-size:7.5px;color:#b5b0ff;font-weight:bold">Pr</span>
<div style="left:546px;top:445px;width:10px;height:1.5px;background:#1d7fd4"></div>
<div style="left:571px;top:428px;width:14px;height:14px;background:#0a2136;border-radius:2px;box-shadow:inset 0 0 0 .6px #2f8fd8"></div>
<span class="t n" style="left:573.5px;top:435.5px;font-size:7.5px;color:#3fa9f5;font-weight:bold">Ps</span>
<div style="left:577px;top:446px;width:4px;height:1px;background:#777"></div>
<svg style="left:605px;top:432px" width="8" height="5"><path d="M.5 4.5L4 1L7.5 4.5" fill="none" stroke="#333"/></svg>
<svg style="left:624px;top:429px" width="11" height="11"><path d="M2 8A3 3 0 0 1 3 3A3.5 3.5 0 0 1 9 4" fill="none" stroke="#444"/><circle cx="7.5" cy="7.5" r="3" fill="#1f7fd0"/></svg>
<svg style="left:646px;top:428px" width="7" height="12"><rect x="1.5" y="0" width="4" height="7.5" rx="2" fill="#5b8ed0"/><path d="M.5 5.5A3 3 0 0 0 6.5 5.5M3.5 8.5V11" fill="none" stroke="#5b8ed0"/></svg>
<span class="t n" style="left:665px;top:435px;font-size:11px;color:#444">A</span>
<svg style="left:684px;top:430px" width="11" height="9"><path d="M.5 3A7 7 0 0 1 10.5 3M2.2 5A4.5 4.5 0 0 1 8.8 5M3.8 6.8A2.2 2.2 0 0 1 7.2 6.8" fill="none" stroke="#333" stroke-width=".9"/></svg>
<svg style="left:699px;top:430px" width="10" height="9"><path d="M1 3H3L6 .5V8.5L3 6H1Z" fill="none" stroke="#333" stroke-width=".9"/><path d="M8 3Q9 4.5 8 6" fill="none" stroke="#999"/></svg>
<svg style="left:713px;top:431px" width="12" height="7"><rect x=".5" y=".5" width="10" height="6" rx="1.5" fill="none" stroke="#333"/><rect x="2" y="2" width="4" height="3" fill="#333"/><rect x="11" y="2.5" width="1" height="2" fill="#333"/></svg>
<span class="t n" style="left:756px;top:430px;font-size:7px;color:#333">10:04</span>
<span class="t n" style="left:735px;top:440.5px;font-size:7px;color:#333">2024/05/12</span>
<svg style="left:778px;top:429px" width="9" height="11"><path d="M4.5 .5A3 3 0 0 0 1.5 3.5V6.5L.5 8.5H8.5L7.5 6.500V3.5A3 3 0 0 0 4.5 .5ZM3.5 9.5H5.500V10.5H3.500Z" fill="#1f6fc0"/></svg>
</div></body></html>
